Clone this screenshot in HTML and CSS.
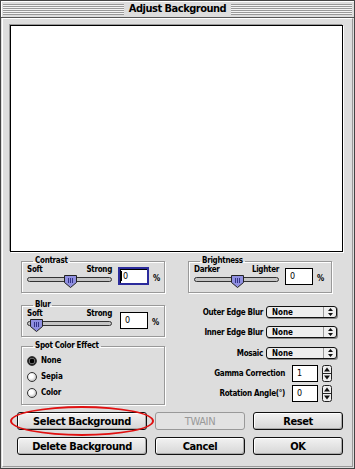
FILE: index.html
```html
<!DOCTYPE html>
<html lang="en">
<head>
    <meta charset="UTF-8">
    <meta name="viewport" content="width=device-width, initial-scale=1.0">
    <title>Adjust Background</title>

    <link rel="stylesheet" href="styles.css">
</head>
<body>
    <div class="window">
        <div class="titlebar">
            <span class="stripes"></span>
            <span class="title">Adjust Background</span>
            <span class="stripes"></span>
        </div>

        <div class="content">
            <div class="preview"></div>

            <div class="controls">
                <!-- columna izquierda -->
                <div class="col-left">
                    <fieldset class="group">
                        <legend>Contrast</legend>
                        <div class="slider-row">
                            <div class="slider">
                                <div class="slider-labels"><span>Soft</span><span>Strong</span></div>
                                <div class="track">
                                    <span class="thumb" style="left: 43%">
                                        <svg width="13" height="13" viewBox="0 0 13 13"><path d="M0.5 0.5H12.5V7.5L6.5 12.5L0.5 7.5Z" fill="#8f8fe0" stroke="#222"/><path d="M4.5 3V8M6.5 3V8M8.5 3V8" stroke="#34348a"/></svg>
                                    </span>
                                </div>
                            </div>
                            <span class="field focus"><span class="caret"></span>0</span>
                            <span class="pct">%</span>
                        </div>
                    </fieldset>

                    <fieldset class="group">
                        <legend>Blur</legend>
                        <div class="slider-row">
                            <div class="slider">
                                <div class="slider-labels"><span>Soft</span><span>Strong</span></div>
                                <div class="track">
                                    <span class="thumb" style="left: 3%">
                                        <svg width="13" height="13" viewBox="0 0 13 13"><path d="M0.5 0.5H12.5V7.5L6.5 12.5L0.5 7.5Z" fill="#8f8fe0" stroke="#222"/><path d="M4.5 3V8M6.5 3V8M8.5 3V8" stroke="#34348a"/></svg>
                                    </span>
                                </div>
                            </div>
                            <span class="field blur">0</span>
                            <span class="pct">%</span>
                        </div>
                    </fieldset>

                    <fieldset class="group spot">
                        <legend>Spot Color Effect</legend>
                        <div class="radio-list">
                            <div class="radio-item"><span class="radio checked"></span>None</div>
                            <div class="radio-item"><span class="radio"></span>Sepia</div>
                            <div class="radio-item"><span class="radio"></span>Color</div>
                        </div>
                    </fieldset>
                </div>

                <!-- columna derecha -->
                <div class="col-right">
                    <fieldset class="group">
                        <legend>Brightness</legend>
                        <div class="slider-row">
                            <div class="slider">
                                <div class="slider-labels"><span>Darker</span><span>Lighter</span></div>
                                <div class="track">
                                    <span class="thumb" style="left: 43%">
                                        <svg width="13" height="13" viewBox="0 0 13 13"><path d="M0.5 0.5H12.5V7.5L6.5 12.5L0.5 7.5Z" fill="#8f8fe0" stroke="#222"/><path d="M4.5 3V8M6.5 3V8M8.5 3V8" stroke="#34348a"/></svg>
                                    </span>
                                </div>
                            </div>
                            <span class="field small">0</span>
                            <span class="pct">%</span>
                        </div>
                    </fieldset>

                    <div class="options">
                        <div class="option-row">
                            <span class="label">Outer Edge Blur</span>
                            <span class="popup">None<span class="popup-arrows"><svg width="5" height="8" viewBox="0 0 5 8"><path d="M2.5 0L5 3H0Z M2.5 8L5 5H0Z" fill="#111"/></svg></span></span>
                        </div>
                        <div class="option-row">
                            <span class="label">Inner Edge Blur</span>
                            <span class="popup">None<span class="popup-arrows"><svg width="5" height="8" viewBox="0 0 5 8"><path d="M2.5 0L5 3H0Z M2.5 8L5 5H0Z" fill="#111"/></svg></span></span>
                        </div>
                        <div class="option-row">
                            <span class="label">Mosaic</span>
                            <span class="popup">None<span class="popup-arrows"><svg width="5" height="8" viewBox="0 0 5 8"><path d="M2.5 0L5 3H0Z M2.5 8L5 5H0Z" fill="#111"/></svg></span></span>
                        </div>
                        <div class="option-row number">
                            <span class="label">Gamma Correction</span>
                            <span class="field">1</span>
                            <span class="spinner"><svg width="10" height="17" viewBox="0 0 10 17"><rect x="0.5" y="0.5" width="9" height="16" rx="2" fill="#eee" stroke="#222"/><path d="M0.5 8.5H9.5" stroke="#222"/><path d="M5 2.5L8 6.5H2Z M5 14.5L8 10.5H2Z" fill="#111"/></svg></span>
                        </div>
                        <div class="option-row number">
                            <span class="label">Rotation Angle(°)</span>
                            <span class="field">0</span>
                            <span class="spinner"><svg width="10" height="17" viewBox="0 0 10 17"><rect x="0.5" y="0.5" width="9" height="16" rx="2" fill="#eee" stroke="#222"/><path d="M0.5 8.5H9.5" stroke="#222"/><path d="M5 2.5L8 6.5H2Z M5 14.5L8 10.5H2Z" fill="#111"/></svg></span>
                        </div>
                    </div>
                </div>
            </div>

            <div class="buttons">
                <div class="btn-wrap">
                    <button class="btn">Select Background</button>
                    <span class="ring"></span>
                </div>
                <button class="btn" disabled>TWAIN</button>
                <button class="btn">Reset</button>
                <button class="btn">Delete Background</button>
                <button class="btn">Cancel</button>
                <button class="btn">OK</button>
            </div>
        </div>
    </div>
</body>
</html>
```

FILE: styles.css
```css
/* Ventana estilo Platinum */

body {
    margin: 0;
    background: #dddddd;
    font-family: "DejaVu Sans Condensed", "DejaVu Sans", sans-serif;
    font-weight: bold;
    color: #000;
}
.window {
    width: 355px;
    height: 469px;
    box-sizing: border-box;
    border: 1px solid #444;
    background: #dddddd;
    display: flex;
    flex-direction: column;
}
.titlebar {
    height: 16px;
    border-bottom: 1px solid #555;
    display: flex;
    align-items: center;
    padding: 0 2px;
    box-shadow: inset 1px 1px #fff;
}
.stripes {
    flex: 1;
    height: 11px;
    background: repeating-linear-gradient(#999 0 1px, #f4f4f4 1px 2px);
}
.title {
    padding: 0 5px;
    font-size: 11px;
    letter-spacing: -0.5px;
    line-height: 14px;
}
.content {
    flex: 1;
    margin: 0 1px 1px;
    border-left: 1px solid #fff;
    border-top: 1px solid #fff;
    border-right: 1px solid #999;
    border-bottom: 1px solid #999;
    padding: 6px 9px 0 7px;
}
.preview {
    height: 225px;
    background: #fff;
    border: 1px solid #000;
    box-shadow: 1px 1px #fff, -1px -1px #999;
}
.controls {
    display: flex;
    gap: 23px;
    height: 148px;
    margin: 5px 6px 0 11px;
}
.col-left {
    width: 144px;
    display: flex;
    flex-direction: column;
}
.col-right {
    flex: 1;
    display: flex;
    flex-direction: column;
}
.col-right .group {
    width: 144px;
}
.group {
    box-sizing: border-box;
    height: 36px;
    margin: 0 0 8px;
    border: 1px solid #999;
    box-shadow: inset 1px 1px #fff, 1px 1px #fff;
    padding: 0 0 0 5px;
    min-width: 0;
}
.group legend {
    font-size: 8px;
    letter-spacing: -0.3px;
    line-height: 8px;
    padding: 0 2px;
    margin-left: 6px;
}
.slider-row {
    display: flex;
    align-items: flex-end;
}
.slider {
    width: 85px;
    margin-right: 6px;
}
.slider-labels {
    display: flex;
    justify-content: space-between;
    font-size: 8px;
    letter-spacing: -0.3px;
    line-height: 9px;
}
.track {
    position: relative;
    height: 5px;
    margin: 3px 0 5px;
    border: 1px solid #333;
    border-radius: 3px;
    background: #c4c4c4;
    box-sizing: border-box;
}
.thumb {
    position: absolute;
    top: -3px;
    width: 13px;
    height: 13px;
}
.thumb svg {
    display: block;
}
.field {
    display: inline-flex;
    align-items: center;
    box-sizing: border-box;
    width: 26px;
    height: 17px;
    padding-left: 4px;
    border: 1px solid #000;
    background: #fff;
    font-family: "DejaVu Sans", sans-serif;
    font-size: 8px;
    font-weight: normal;
}
.field.small {
    width: 28px;
}
.field.blur {
    width: 28px;
    margin-left: 2px;
}
.field.focus {
    width: 31px;
    height: 18px;
    border: 2px solid #2b2b9c;
    padding-left: 1px;
    box-shadow: inset 1px 1px #000;
}
.caret {
    width: 1px;
    height: 10px;
    background: #000;
    margin-right: 1px;
}
.pct {
    font-size: 8px;
    margin-left: 4px;
    margin-bottom: 4px;
}
.slider-row .field {
    margin-bottom: 2px;
}
.spot {
    height: 63px;
    margin: -3px 0 0;
}
.radio-list {
    display: flex;
    flex-direction: column;
    gap: 6px;
    padding-top: 6px;
}
.radio-item {
    display: flex;
    align-items: center;
    gap: 4px;
    font-size: 8px;
    letter-spacing: -0.2px;
    line-height: 10px;
}
.radio {
    width: 10px;
    height: 10px;
    box-sizing: border-box;
    border-radius: 50%;
    border: 1px solid #333;
    background: radial-gradient(circle at 40% 40%, #fff 0 2px, #d8d8d8 4px, #aaa 6px);
}
.radio.checked {
    background: radial-gradient(circle, #000 0 2px, #666 2.5px 3px, #222 3.5px);
}
.options {
    display: flex;
    flex-direction: column;
    margin-top: 5px;
}
.option-row {
    display: flex;
    justify-content: flex-end;
    align-items: center;
    gap: 3px;
    height: 12px;
    margin-bottom: 8px;
}
.option-row:nth-child(2) {
    margin-bottom: 9px;
}
.option-row:nth-child(3) {
    margin-bottom: 6px;
}
.option-row.number {
    height: 17px;
    margin-bottom: 3px;
    gap: 4px;
    padding-right: 5px;
}
.option-row.number .label {
    margin-right: 3px;
}
.label {
    font-size: 8px;
    letter-spacing: -0.3px;
    white-space: nowrap;
}
.popup {
    display: flex;
    align-items: center;
    width: 71px;
    height: 12px;
    box-sizing: border-box;
    border: 1px solid #111;
    border-radius: 3px;
    background: #eeeeee;
    box-shadow: 1px 1px #888;
    padding-left: 5px;
    font-size: 8px;
}
.popup-arrows {
    margin-left: auto;
    width: 12px;
    height: 10px;
    border-left: 1px solid #999;
    display: flex;
    align-items: center;
    justify-content: center;
}
.popup-arrows svg,
.spinner svg {
    display: block;
}
.buttons {
    display: grid;
    grid-template-columns: 130px 90px 90px;
    column-gap: 8px;
    row-gap: 7px;
    margin: 7px 0 0 7px;
}
.btn-wrap {
    position: relative;
    display: flex;
}
.btn {
    height: 18px;
    padding: 0;
    border: 1px solid #111;
    border-radius: 3px;
    background: linear-gradient(#f2f2f2, #d6d6d6);
    box-shadow: inset 1px 1px #fff, inset -1px -1px #aaa;
    font-family: inherit;
    font-weight: bold;
    font-size: 11px;
    letter-spacing: -0.4px;
    color: #000;
}
.btn-wrap .btn {
    flex: 1;
}
.btn:disabled {
    border-color: #999;
    color: #999;
    font-weight: normal;
    background: #e2e2e2;
    box-shadow: none;
}
.ring {
    position: absolute;
    left: -7px;
    right: -7px;
    top: -6px;
    bottom: -6px;
    border: 2px solid #e01010;
    border-radius: 50%;
}
```
